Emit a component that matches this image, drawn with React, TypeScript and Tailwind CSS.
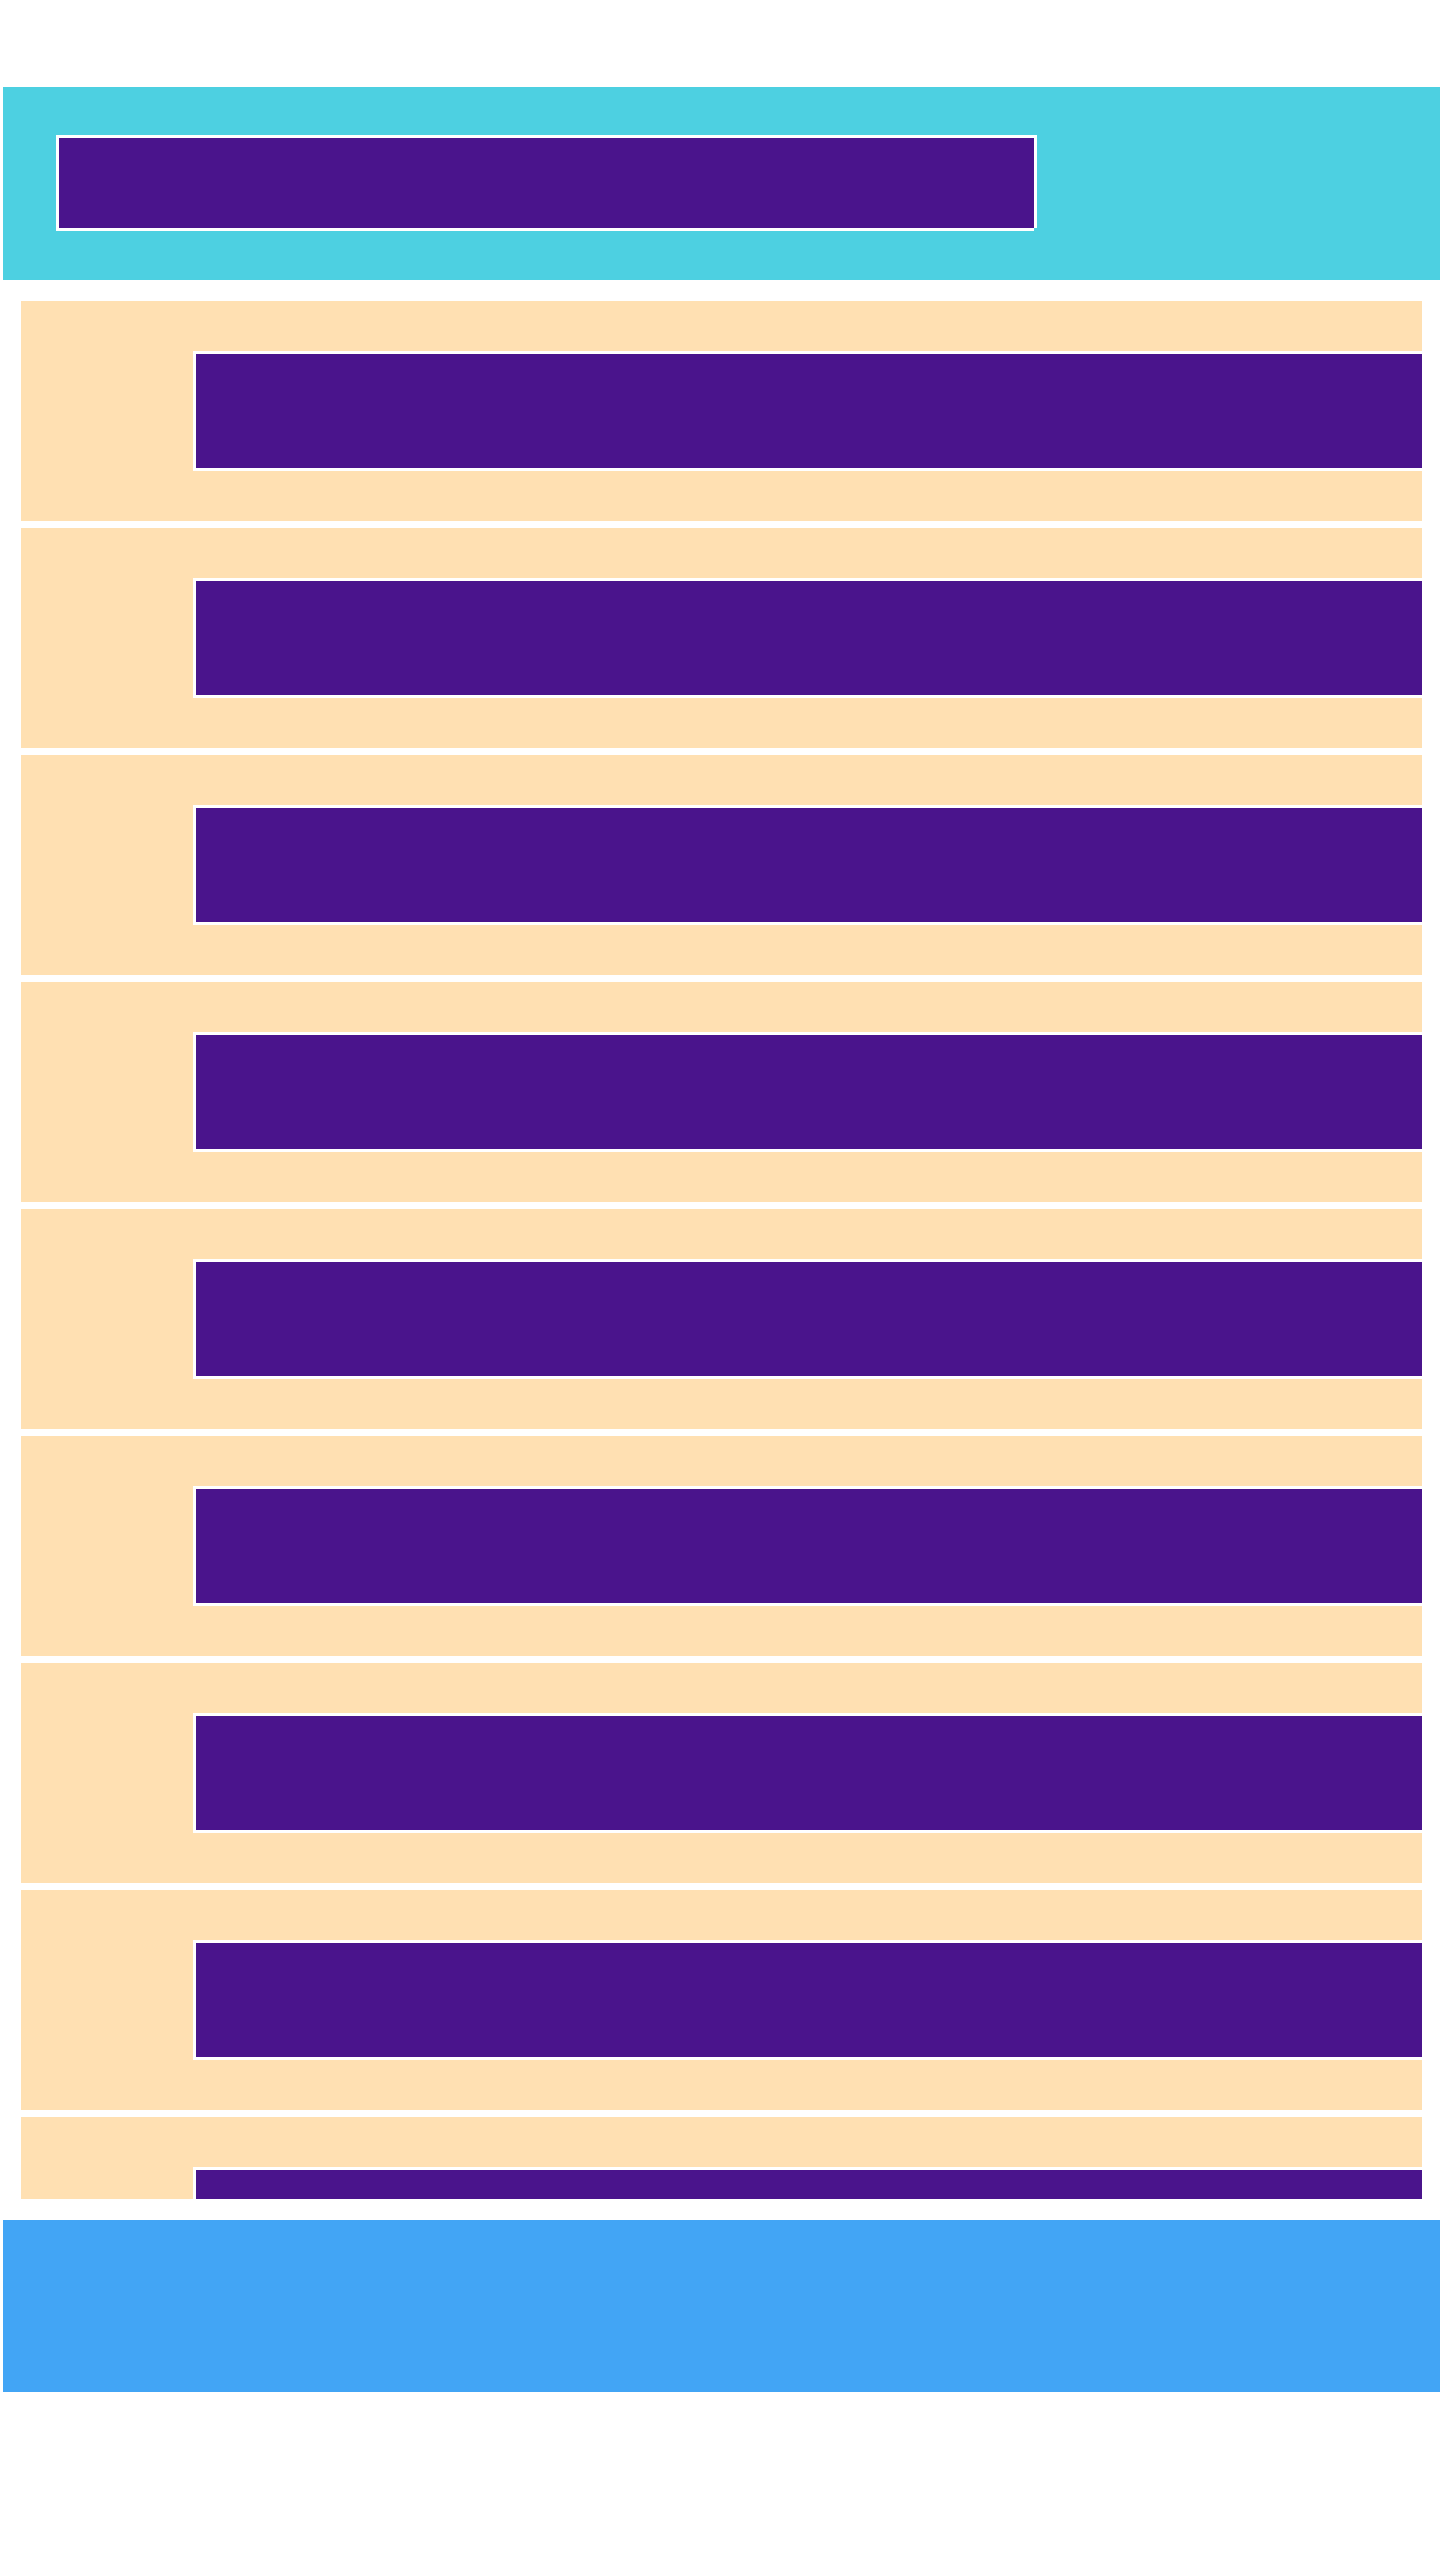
const rows = Array.from({ length: 12 }, (_, index) => index);

function HeaderField() {
  return (
    <div className="flex w-[981px] max-w-full">
      <div className="h-24 flex-1 border-y-[3px] border-l-[3px] border-white bg-[#4a148c]" />
      <div className="mb-[3px] w-[3px] bg-white" />
    </div>
  );
}

function Row() {
  return (
    <li className="shrink-0 bg-[#ffe0b2] py-[50px] pl-[172px]">
      <div className="h-[120px] border-y-[3px] border-l-[3px] border-white bg-[#4a148c]" />
    </li>
  );
}

export default function App() {
  return (
    <div className="flex h-screen flex-col bg-white pt-[87px] pb-[168px] pl-[3px]">
      <header className="shrink-0 bg-[#4dd0e1] px-[53px] pt-12 pb-[49px]">
        <HeaderField />
      </header>
      <main className="my-[21px] mr-[18px] ml-[18px] min-h-0 flex-1 overflow-hidden">
        <ul className="flex flex-col gap-[7px]">
          {rows.map((row) => (
            <Row key={row} />
          ))}
        </ul>
      </main>
      <footer className="h-[172px] shrink-0 bg-[#42a5f5]" />
    </div>
  );
}
